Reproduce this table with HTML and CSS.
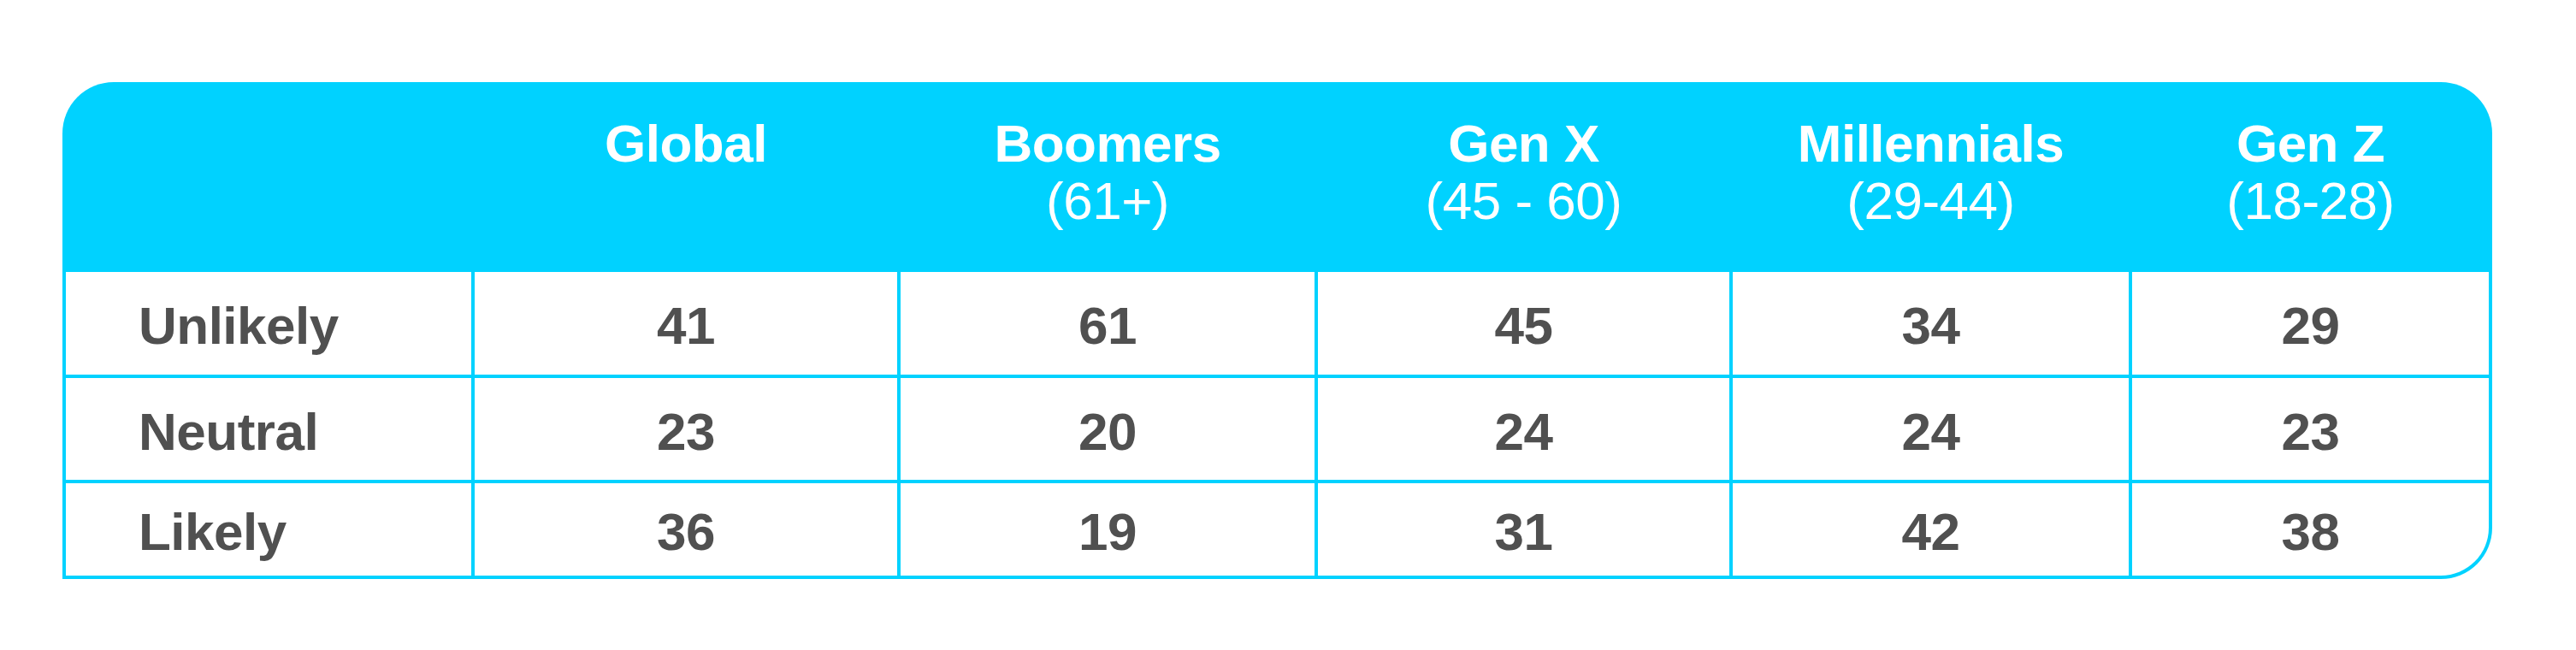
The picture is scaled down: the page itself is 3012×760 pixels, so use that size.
FILE: index.html
```html
<!DOCTYPE html>
<html lang="en">
<head>
<meta charset="utf-8">
<title>Likelihood by generation</title>
<link rel="stylesheet" href="styles.css">
</head>
<body>
<div class="table" role="table">
  <div class="th corner" role="columnheader"></div>
  <div class="th" role="columnheader"><span class="name">Global</span></div>
  <div class="th" role="columnheader"><span class="name">Boomers</span><span class="age">(61+)</span></div>
  <div class="th" role="columnheader"><span class="name">Gen X</span><span class="age">(45 - 60)</span></div>
  <div class="th" role="columnheader"><span class="name">Millennials</span><span class="age">(29-44)</span></div>
  <div class="th" role="columnheader"><span class="name">Gen Z</span><span class="age">(18-28)</span></div>

  <div class="td label" role="rowheader">Unlikely</div>
  <div class="td num" role="cell">41</div>
  <div class="td num" role="cell">61</div>
  <div class="td num" role="cell">45</div>
  <div class="td num" role="cell">34</div>
  <div class="td num" role="cell">29</div>

  <div class="td label" role="rowheader">Neutral</div>
  <div class="td num" role="cell">23</div>
  <div class="td num" role="cell">20</div>
  <div class="td num" role="cell">24</div>
  <div class="td num" role="cell">24</div>
  <div class="td num" role="cell">23</div>

  <div class="td label" role="rowheader">Likely</div>
  <div class="td num" role="cell">36</div>
  <div class="td num" role="cell">19</div>
  <div class="td num" role="cell">31</div>
  <div class="td num" role="cell">42</div>
  <div class="td num last" role="cell">38</div>
</div>
</body>
</html>
```

FILE: styles.css
```css
html, body {
  margin: 0;
  background: #ffffff;
}

body {
  padding: 96px 0 0 73px;
  font-family: "Liberation Sans", Arial, Helvetica, sans-serif;
}

.table {
  display: grid;
  width: 2841px;
  box-sizing: border-box;
  grid-template-columns: 474px 494px 484px 481px 463px 417px;
  grid-template-rows: 218px 120px 119px 108px;
  gap: 4px;
  padding: 0 4px 4px 4px;
  background: #00d2ff;
  border-radius: 60px 60px 60px 0;
}

.th {
  display: flex;
  flex-direction: column;
  align-items: center;
  padding-top: 38px;
  color: #ffffff;
  font-size: 62px;
  line-height: 67px;
  letter-spacing: -0.5px;
  text-align: center;
}

.th .name {
  font-weight: 700;
}

.th .age {
  font-weight: 400;
}

.td {
  display: flex;
  align-items: center;
  box-sizing: border-box;
  padding-top: 5px;
  background: #ffffff;
  color: #505050;
  font-size: 62px;
  letter-spacing: -0.5px;
  font-weight: 700;
}

.td.label {
  padding-left: 85px;
}

.td.num {
  justify-content: center;
}

.td.last {
  border-bottom-right-radius: 56px;
}
```
